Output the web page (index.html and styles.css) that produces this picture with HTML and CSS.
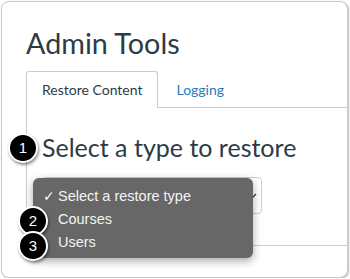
FILE: index.html
```html
<!DOCTYPE html>
<html lang="en">
<head>
  <meta charset="UTF-8">
  <title>Admin Tools</title>
  <link rel="stylesheet" href="styles.css">
</head>
<body>
  <div class="frame">
    <h1 class="page-title">Admin Tools</h1>

    <!-- Tabs -->
    <div class="tabs">
      <a class="tab active">Restore Content</a>
      <a class="tab">Logging</a>
    </div>

    <div class="panel">
      <h2>Select a type to restore</h2>

      <div class="select-wrap">
        <div class="select">
          <svg class="chevron" width="9" height="6" viewBox="0 0 9 6">
            <path d="M1 1 L4.5 4.5 L8 1" fill="none" stroke="#2d3b45" stroke-width="1.3"/>
          </svg>
        </div>

        <!-- Open dropdown -->
        <ul class="menu">
          <li><span class="mark">✓</span>Select a restore type</li>
          <li><span class="mark"></span>Courses</li>
          <li><span class="mark"></span>Users</li>
        </ul>
      </div>
    </div>

    <!-- Callout numbers -->
    <span class="badge badge-1">1</span>
    <span class="badge badge-2">2</span>
    <span class="badge badge-3">3</span>
  </div>
</body>
</html>
```

FILE: styles.css
```css
body {
  margin: 0;
  background-color: #fff;
  font-family: 'Lato', sans-serif;
  color: #2d3b45;
}

.frame {
  position: relative;
  box-sizing: border-box;
  width: 347px;
  height: 277px;
  margin: 1px 0 0 1px;
  padding: 24px 0 0 24px;
  border: 1px solid #c8c8c8;
  border-radius: 8px;
  box-shadow: 1px 1px 2px rgba(0, 0, 0, 0.25);
  background-color: #fff;
  overflow: hidden;
}

.page-title {
  margin: 0;
  font-size: 28.75px;
  line-height: 34px;
  font-weight: 400;
}

.tabs {
  display: flex;
  margin-top: 11px;
  border-bottom: 1px solid #c7cdd1;
}

.tab {
  padding: 8px 15px 7px;
  margin-right: 2px;
  font-size: 14px;
  line-height: 20px;
  color: #2a7abc;
  border: 1px solid transparent;
  border-bottom: none;
}

.tab.active {
  color: #2d3b45;
  background-color: #fff;
  border-color: #c7cdd1;
  border-radius: 3px 3px 0 0;
  padding-bottom: 8px;
  margin-bottom: -1px;
}

.panel {
  padding: 24px 0 31px 15px;
  border-left: 1px solid #c7cdd1;
  border-bottom: 1px solid #c7cdd1;
}

.panel h2 {
  margin: 0 0 15px;
  font-size: 25px;
  line-height: 30px;
  font-weight: 400;
}

.select-wrap {
  position: relative;
  width: 220px;
}

.select {
  display: flex;
  justify-content: flex-end;
  align-items: center;
  box-sizing: border-box;
  height: 37px;
  padding-right: 4px;
  border: 1px solid #c7cdd1;
  border-radius: 4px;
}

.menu {
  position: absolute;
  left: -9px;
  top: 1px;
  box-sizing: border-box;
  width: 220px;
  height: 80px;
  margin: 0;
  padding: 7px 0 0;
  list-style: none;
  background-color: #676767;
  border-radius: 6px;
  box-shadow: 0 3px 8px rgba(0, 0, 0, 0.35);
  font-family: 'Liberation Sans', sans-serif;
  font-size: 14.5px;
  line-height: 23px;
  color: #f4f4f4;
}

.menu li {
  display: flex;
  padding-left: 10px;
}

.mark {
  width: 15px;
  font-family: 'DejaVu Sans', sans-serif;
  font-size: 14px;
}

.badge {
  position: absolute;
  box-sizing: border-box;
  width: 30px;
  height: 30px;
  border: 2px solid #fff;
  border-radius: 50%;
  background-color: #000;
  box-shadow: 1px 2px 3px rgba(0, 0, 0, 0.45);
  color: #fff;
  font-family: 'Liberation Sans', sans-serif;
  font-size: 15px;
  line-height: 26px;
  text-align: center;
}

.badge-1 { left: 6px; top: 131px; }
.badge-2 { left: 16px; top: 204px; }
.badge-3 { left: 16px; top: 229px; }
```
